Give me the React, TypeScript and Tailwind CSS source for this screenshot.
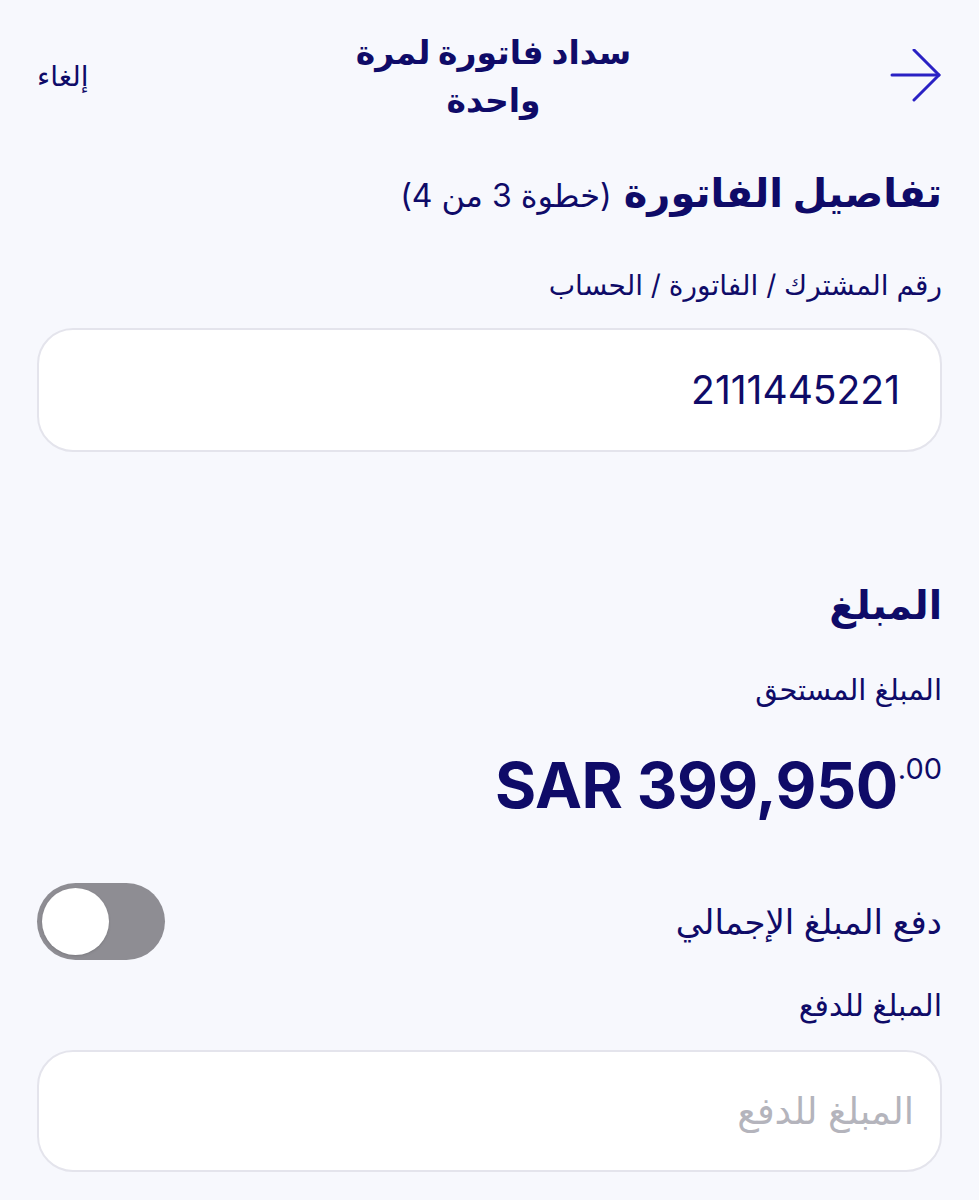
import React, { useState } from 'react';

const font = { fontFamily: '"Inter", "DejaVu Sans", "Noto Sans", sans-serif' };

export default function App() {
  const [payAll, setPayAll] = useState(false);
  const [amount, setAmount] = useState('');

  return (
    <div dir="rtl" style={font} className="min-h-[1200px] w-full bg-[#f7f8fd] px-[37px] text-[#0f0b68]">
      {/* header */}
      <div className="flex items-center justify-between pt-[28px]">
        <button className="flex h-[60px] w-[52px] items-center justify-start text-[#2a21c4]">
          <svg width="52" height="54" viewBox="0 0 52 54" fill="none" stroke="currentColor" strokeWidth="3" strokeLinecap="round" strokeLinejoin="round">
            <path d="M2 26h47" />
            <path d="M24 1l25 25-25 25" />
          </svg>
        </button>
        <h1 className="w-[310px] text-center text-[33px] font-bold leading-[48px]">سداد فاتورة لمرة واحدة</h1>
        <button className="w-[60px] text-left text-[28px] leading-[30px]">إلغاء</button>
      </div>

      {/* bill details */}
      <div className="mt-[44px] flex items-baseline gap-3">
        <h2 className="text-[40px] font-bold leading-[50px]">تفاصيل الفاتورة</h2>
        <span className="text-[32px]">(خطوة 3 من 4)</span>
      </div>

      <label className="mt-[45px] block text-[28px] leading-[40px]">رقم المشترك / الفاتورة / الحساب</label>
      <div className="mt-[23px] flex h-[124px] items-center rounded-[36px] border-2 border-[#e4e4ec] bg-white px-[40px]">
        <span className="text-[39px]">2111445221</span>
      </div>

      {/* amount */}
      <h2 className="mt-[128px] text-[39px] font-bold leading-[50px]">المبلغ</h2>
      <p className="mt-[40px] text-[29px] leading-[40px]">المبلغ المستحق</p>
      <div dir="ltr" className="mt-[37px] flex justify-end">
        <span className="text-[63px] font-bold leading-[76px] tracking-[-0.5px]">SAR 399,950</span>
        <span className="mt-[4px] text-[29px] leading-[36px]">.00</span>
      </div>

      <div className="mt-[60px] flex items-center justify-between">
        <span className="text-[34px] leading-[44px]">دفع المبلغ الإجمالي</span>
        <button
          onClick={() => setPayAll(!payAll)}
          className={`flex h-[77px] w-[128px] items-center rounded-full p-[5px] ${payAll ? 'justify-start bg-[#2a21c4]' : 'justify-end bg-[#8e8d93]'}`}
        >
          <span className="h-[67px] w-[67px] rounded-full bg-white shadow" />
        </button>
      </div>

      <label className="mt-[25px] block text-[30px] leading-[40px]">المبلغ للدفع</label>
      <div className="mt-[25px] flex h-[122px] items-center rounded-[36px] border-2 border-[#e4e4ec] bg-white px-[26px]">
        <input
          value={amount}
          onChange={e => setAmount(e.target.value)}
          placeholder="المبلغ للدفع"
          className="w-full bg-transparent text-[37px] text-[#0f0b68] outline-none placeholder:text-[#b4b4bc]"
        />
      </div>
    </div>
  );
}
